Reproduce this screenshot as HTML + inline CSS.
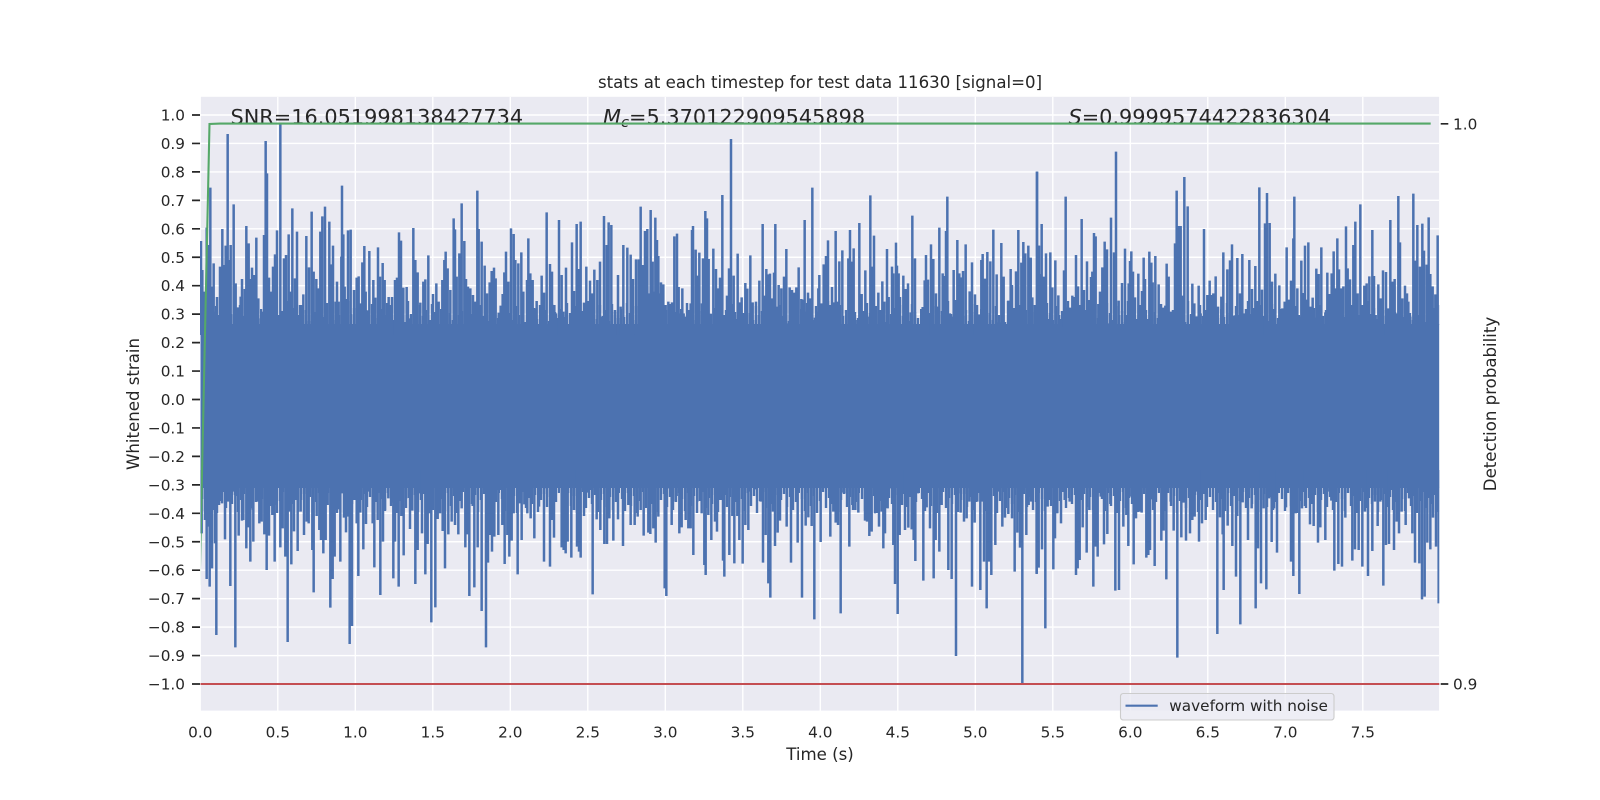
<!DOCTYPE html>
<html lang="en">
<head>
<meta charset="utf-8">
<title>stats at each timestep</title>
<style>
html,body{margin:0;padding:0;background:#fff;width:1600px;height:800px;overflow:hidden}
svg{display:block}
text{font-family:"DejaVu Sans","Liberation Sans",sans-serif;fill:#262626}
.t{font-size:15.28px}
.l{font-size:16.6px}
.a{font-size:20.83px}
.s{fill:none;stroke:#4C72B0;stroke-width:7.5}
</style>
</head>
<body>
<svg width="1600" height="800" viewBox="0 0 1600 800" xmlns="http://www.w3.org/2000/svg">
<defs>
<clipPath id="c"><rect x="200" y="96" width="1239.3" height="616"/></clipPath>
<clipPath id="g"><rect x="200.9" y="96" width="1238" height="616"/></clipPath>
<pattern id="pt" patternUnits="userSpaceOnUse" x="200" y="295" width="60" height="30"><path fill="none" stroke="#4C72B0" stroke-width="2.4" d="M1 30V14M4 30V22M7 30V8M10 30V18M13 30V25M16 30V11M19 30V20M22 30V16M25 30V27M28 30V6M31 30V19M34 30V13M37 30V24M40 30V10M43 30V21M46 30V15M49 30V26M52 30V9M55 30V17M58 30V23"/></pattern>
<pattern id="pb" patternUnits="userSpaceOnUse" x="200" y="487" width="60" height="30"><path fill="none" stroke="#4C72B0" stroke-width="2.4" d="M2 0V12M5 0V24M8 0V6M11 0V19M14 0V9M17 0V26M20 0V14M23 0V5M26 0V21M29 0V11M32 0V17M35 0V8M38 0V25M41 0V13M44 0V7M47 0V20M50 0V10M53 0V23M56 0V15M59 0V6"/></pattern>
</defs>
<rect width="1600" height="800" fill="#fff"/>
<rect x="200.9" y="96.8" width="1238.2" height="613.8" fill="#EAEAF2"/>
<path fill="none" stroke="#fff" stroke-width="1.39" d="M201 115H1439M201 143.45H1439M201 171.9H1439M201 200.35H1439M201 228.8H1439M201 257.25H1439M201 285.7H1439M201 314.15H1439M201 342.6H1439M201 371.05H1439M201 399.5H1439M201 427.95H1439M201 456.4H1439M201 484.85H1439M201 513.3H1439M201 541.75H1439M201 570.2H1439M201 598.65H1439M201 627.1H1439M201 655.55H1439M201 684H1439M277.8 97V711M355.3 97V711M432.8 97V711M510.3 97V711M587.8 97V711M665.3 97V711M742.8 97V711M820.3 97V711M897.8 97V711M975.3 97V711M1052.8 97V711M1130.3 97V711M1207.8 97V711M1285.3 97V711M1362.8 97V711"/>
<g clip-path="url(#c)">
<rect x="200.5" y="295" width="1238.8" height="30" fill="url(#pt)"/>
<rect x="200.5" y="487" width="1238.8" height="30" fill="url(#pb)"/>
<rect x="200.5" y="324" width="1238.8" height="164" fill="#4C72B0"/>
<g transform="translate(200,125) scale(.33333)"><path class="s" d="M3 630V348M7 630V435M12 630V500M20 630V308M25 630V360M31 630V188M41 630V415M36 630V485M47 630V560M51 630V516M60 630V425M67 630V312M72 630V420M77 630V362M83 630V27M92 630V360M88 630V405M101 630V238M107 630V475M114 630V547M118 630V600M122 630V515M126 630V462M130 630V585M134 630V492M139 630V303M146 630V355M151 630V462M156 630V428M162 630V450M169 630V338M175 630V520M183 630V580M188 630V560M192 630V330M197 630V48M201 630V145M207 630V458M214 630V500M219 630V425M225 630V388M231 630V316M241 630V-3M252 630V400M258 630V390M266 630V328M272 630V500M277 630V250M285 630V460M291 630V320M297 630V570M301 630V585M305 630V540M310 630V508M319 630V333M327 630V427M335 630V260M341 630V440M349 630V462M355 630V490M361 630V320M367 630V274M375 630V245M380 630V550M388 630V290M393 630V418M399 630V362M407 630V530M411 630V470M416 630V530M424 630V395M426 630V182M430 630V328M434 630V485M438 630V522M444 630V316M452 630V314M462 630V495M470 630V458M476 630V454M481 630V535M487 630V412M493 630V363M497 630V500M503 630V556M508 630V378M520 630V465M526 630V518M534 630V367M540 630V455M548 630V414M554 630V465M560 630V570M566 630V516M571 630V540M576 630V516M585 630V465M591 630V458M597 630V322M603 630V347M610 630V488M620 630V486M630 630V580M640 630V309M646 630V405M653 630V442M661 630V533M670 630V470M676 630V463M685 630V391M691 630V585M699 630V507M709 630V475M716 630V530M727 630V465M733 630V405M737 630V380M743 630V430M751 630V495M761 630V280M765 630V313M770 630V455M778 630V385M785 630V235M793 630V348M798 630V462M804 630V485M811 630V490M819 630V510M825 630V530M832 630V197M836 630V312M845 630V350M854 630V422M861 630V505M869 630V472M875 630V438M882 630V428M887 630V460M896 630V563M902 630V542M908 630V507M913 630V442M918 630V380M925 630V470M933 630V310M941 630V327M946 630V405M955 630V415M964 630V382M970 630V500M981 630V465M985 630V340M991 630V445M998 630V465M1005 630V550M1010 630V528M1016 630V605M1025 630V452M1032 630V503M1040 630V262M1050 630V417M1056 630V440M1063 630V540M1068 630V565M1077 630V285M1085 630V450M1090 630V560M1098 630V428M1108 630V605M1116 630V352M1122 630V498M1130 630V297M1136 630V432M1142 630V290M1152 630V533M1159 630V425M1164 630V575M1170 630V467M1177 630V505M1183 630V434M1192 630V465M1200 630V410M1206 630V575M1212 630V273M1220 630V360M1226 630V292M1234 630V300M1245 630V555M1254 630V450"/></g>
<g transform="translate(620,125) scale(.33333)"><path class="s" d="M2 630V545M10 630V360M14 630V620M22 630V368M32 630V389M39 630V462M48 630V403M56 630V403M62 630V245M69 630V420M75 630V318M82 630V312M87 630V505M92 630V255M98 630V410M101 630V500M106 630V278M111 630V345M115 630V393M119 630V505M123 630V472M130 630V478M137 630V540M145 630V530M150 630V537M156 630V532M163 630V334M171 630V326M176 630V486M180 630V565M187 630V490M191 630V565M196 630V575M201 630V590M207 630V555M212 630V535M216 630V315M219 630V303M227 630V374M233 630V452M238 630V383M246 630V535M249 630V400M256 630V258M261 630V280M266 630V402M272 630V566M280 630V371M288 630V432M294 630V490M300 630V458M307 630V210M313 630V570M321 630V512M327 630V430M333 630V42M341 630V452M348 630V582M353 630V386M359 630V532M365 630V517M371 630V564M376 630V474M382 630V491M391 630V391M398 630V532M408 630V530M418 630V467M428 630V297M433 630V512M439 630V432M444 630V448M450 630V446M456 630V520M462 630V443M466 630V297M470 630V545M476 630V480M484 630V490M492 630V455M499 630V372M504 630V595M509 630V487M516 630V495M522 630V503M529 630V487M536 630V427M544 630V522M550 630V524M554 630V285M560 630V560M564 630V503M570 630V520M577 630V188M585 630V578M590 630V560M595 630V490M598 630V450M604 630V535M611 630V418M618 630V393M624 630V346M630 630V540M636 630V486M642 630V532M647 630V318M652 630V530M658 630V409M667 630V376M680 630V610M685 630V400M690 630V315M696 630V410M701 630V370M712 630V585M718 630V294M725 630V507M731 630V558M736 630V436M743 630V575M751 630V211M757 630V425M762 630V332M766 630V575M775 630V503M780 630V555M787 630V469M793 630V530M801 630V372M806 630V516M816 630V425M820 630V445M828 630V353M831 630V422M836 630V445M840 630V516M850 630V452M857 630V492M864 630V475M872 630V562M877 630V272M885 630V400M892 630V597M900 630V620M908 630V546M914 630V466M918 630V390M924 630V464M933 630V358M940 630V402M948 630V505M952 630V545M958 630V308M968 630V445M973 630V453M978 630V318M982 630V215M990 630V565M995 630V575M1001 630V435M1006 630V525M1012 630V345M1018 630V445M1022 630V457M1029 630V438M1037 630V358M1049 630V499M1056 630V412M1065 630V508M1071 630V540M1077 630V568M1084 630V405M1088 630V387M1095 630V461M1102 630V381M1111 630V409M1120 630V314M1130 630V448M1137 630V592M1144 630V354M1151 630V455M1158 630V610M1165 630V527M1172 630V432M1176 630V480M1182 630V598M1188 630V439M1195 630V315M1204 630V413M1210 630V351M1216 630V385M1225 630V362M1232 630V400M1245 630V540M1251 630V140M1256 630V362"/></g>
<g transform="translate(1030,125) scale(.33333)"><path class="s" d="M2 630V398M7 630V517M15 630V540M21 630V140M27 630V362M35 630V297M31 630V447M41 630V455M48 630V385M54 630V582M61 630V382M67 630V487M76 630V406M85 630V511M93 630V582M102 630V436M107 630V215M114 630V547M120 630V548M127 630V512M132 630V516M138 630V390M144 630V484M149 630V607M155 630V282M162 630V495M171 630V409M177 630V525M183 630V456M187 630V440M192 630V324M197 630V334M205 630V537M210 630V500M217 630V427M224 630V350M231 630V373M236 630V595M243 630V278M252 630V382M258 630V80M266 630V527M276 630V474M280 630V600M285 630V371M291 630V570M296 630V475M300 630V408M304 630V379M309 630V440M315 630V517M325 630V446M331 630V590M336 630V498M341 630V398M345 630V462M351 630V582M358 630V380M364 630V413M368 630V472M376 630V393M386 630V478M393 630V537M400 630V548M406 630V542M410 630V416M416 630V455M423 630V560M429 630V555M435 630V355M440 630V197M445 630V303M452 630V303M458 630V512M463 630V156M473 630V244M487 630V476M493 630V535M500 630V574M506 630V482M512 630V565M517 630V610M522 630V312M527 630V560M532 630V510M539 630V467M545 630V510M550 630V505M557 630V454M564 630V545M574 630V515M580 630V382M592 630V433M600 630V406M606 630V358M612 630V572M617 630V570M622 630V399M630 630V505M637 630V387M642 630V565M648 630V552M658 630V405M666 630V492M676 630V423M682 630V528M688 630V187M696 630V494M705 630V295M711 630V204M719 630V294M726 630V470M730 630V552M736 630V446M748 630V481M757 630V550M764 630V530M770 630V367M776 630V524M783 630V467M790 630V340M793 630V215M802 630V490M808 630V575M814 630V407M820 630V504M825 630V362M829 630V524M835 630V352M842 630V545M848 630V518M855 630V578M859 630V431M866 630V447M874 630V367M881 630V600M886 630V562M892 630V443M899 630V507M905 630V445M911 630V379M917 630V490M922 630V340M927 630V433M933 630V490M940 630V484M948 630V304M953 630V430M960 630V463M966 630V540M970 630V360M976 630V290M983 630V505M991 630V238M997 630V540M1003 630V482M1010 630V475M1018 630V454M1027 630V315M1032 630V453M1037 630V570M1045 630V478M1052 630V520M1059 630V436M1068 630V441M1075 630V550M1081 630V285M1087 630V470M1094 630V462M1100 630V565M1105 630V213M1110 630V352M1117 630V520M1125 630V482M1131 630V505M1135 630V530M1141 630V575M1150 630V206M1156 630V407M1162 630V300M1170 630V425M1177 630V296M1182 630V377M1190 630V419M1196 630V277M1201 630V447M1208 630V484M1216 630V508M1223 630V331"/></g>
<g transform="translate(200,470) scale(.33333)"><path class="s" d="M5 0V190M15 0V150M20 0V327M25 0V170M29 0V350M36 0V295M42 0V120M45 0V220M49 0V495M57 0V105M66 0V100M75 0V208M84 0V95M91 0V348M99 0V65M106 0V532M112 0V78M116 0V197M122 0V50M126 0V152M130 0V150M139 0V235M145 0V172M151 0V275M155 0V115M160 0V215M171 0V95M178 0V160M185 0V155M193 0V193M200 0V300M207 0V197M212 0V93M217 0V135M224 0V275M230 0V105M241 0V232M248 0V175M256 0V260M263 0V516M270 0V125M274 0V283M282 0V184M286 0V90M293 0V243M302 0V125M312 0V195M320 0V155M326 0V160M337 0V240M341 0V367M350 0V138M358 0V180M363 0V210M370 0V250M377 0V210M383 0V105M391 0V413M398 0V327M404 0V260M410 0V120M414 0V118M421 0V275M427 0V70M432 0V143M438 0V187M443 0V140M449 0V522M456 0V468M463 0V90M470 0V160M475 0V318M481 0V128M490 0V238M498 0V162M505 0V65M518 0V160M523 0V292M533 0V150M541 0V375M549 0V215M555 0V120M565 0V85M574 0V98M580 0V325M585 0V215M596 0V350M604 0V138M611 0V256M619 0V85M630 0V177M637 0V122M646 0V342M653 0V240M657 0V70M666 0V190M676 0V313M683 0V222M687 0V130M694 0V457M706 0V412M713 0V147M720 0V130M728 0V183M735 0V295M745 0V193M755 0V155M765 0V165M775 0V193M785 0V115M796 0V232M801 0V193M808 0V378M818 0V108M823 0V352M833 0V232M845 0V423M851 0V50M858 0V532M864 0V278M869 0V195M876 0V245M883 0V200M889 0V60M895 0V195M901 0V60M907 0V165M914 0V282M922 0V195M928 0V260M935 0V212M941 0V130M953 0V313M958 0V100M965 0V210M973 0V103M982 0V130M992 0V145M1003 0V205M1017 0V110M1032 0V275M1040 0V55M1050 0V290M1056 0V150M1062 0V203M1074 0V35M1085 0V232M1091 0V240M1097 0V250M1103 0V215M1114 0V263M1122 0V120M1131 0V230M1137 0V245M1142 0V263M1152 0V138M1163 0V68M1172 0V60M1178 0V373M1190 0V148M1201 0V180M1213 0V222M1221 0V222M1228 0V145M1240 0V212M1254 0V148"/></g>
<g transform="translate(620,470) scale(.33333)"><path class="s" d="M9 0V228M25 0V105M32 0V165M44 0V165M53 0V140M62 0V120M71 0V197M85 0V188M91 0V192M100 0V175M107 0V218M115 0V140M122 0V52M130 0V30M134 0V355M139 0V378M147 0V55M155 0V165M160 0V95M170 0V78M178 0V190M185 0V172M197 0V150M205 0V175M212 0V175M220 0V255M232 0V95M245 0V130M253 0V285M257 0V315M265 0V135M274 0V210M285 0V155M291 0V185M300 0V90M309 0V272M313 0V320M319 0V75M328 0V255M337 0V138M343 0V280M352 0V138M358 0V210M368 0V281M376 0V165M385 0V180M392 0V65M406 0V58M422 0V95M429 0V278M437 0V195M445 0V340M451 0V383M459 0V125M465 0V228M473 0V188M480 0V152M490 0V40M500 0V170M513 0V278M521 0V40M533 0V218M546 0V383M557 0V167M565 0V142M575 0V168M583 0V448M592 0V15M602 0V216M610 0V55M617 0V50M631 0V200M640 0V125M647 0V158M654 0V165M662 0V430M670 0V68M680 0V70M688 0V230M697 0V105M706 0V120M715 0V128M725 0V35M735 0V152M741 0V155M748 0V198M755 0V185M765 0V130M777 0V170M785 0V125M790 0V235M795 0V190M803 0V115M813 0V55M820 0V225M825 0V342M833 0V432M839 0V195M846 0V105M855 0V180M865 0V173M875 0V178M881 0V210M886 0V273M894 0V70M910 0V332M920 0V112M930 0V175M941 0V325M947 0V210M958 0V245M965 0V105M975 0V50M985 0V300M995 0V327M1008 0V558M1014 0V70M1022 0V128M1032 0V155M1040 0V145M1048 0V95M1056 0V350M1064 0V158M1072 0V95M1081 0V360M1086 0V95M1092 0V275M1100 0V415M1107 0V275M1114 0V315M1126 0V225M1135 0V65M1147 0V170M1155 0V143M1165 0V132M1176 0V145M1184 0V305M1192 0V188M1200 0V233M1207 0V642M1219 0V195M1226 0V105M1240 0V42M1250 0V312"/></g>
<g transform="translate(1030,470) scale(.33333)"><path class="s" d="M3 0V95M10 0V45M20 0V310M26 0V293M36 0V238M46 0V475M53 0V110M60 0V90M70 0V298M75 0V205M82 0V130M93 0V160M104 0V90M112 0V45M119 0V95M127 0V45M138 0V315M143 0V295M149 0V270M158 0V172M170 0V248M178 0V120M190 0V350M197 0V230M203 0V260M212 0V80M222 0V223M232 0V192M241 0V102M256 0V362M267 0V360M280 0V170M289 0V135M295 0V228M304 0V80M311 0V283M318 0V145M328 0V125M335 0V128M349 0V263M355 0V255M360 0V240M367 0V88M374 0V288M380 0V45M394 0V212M401 0V182M409 0V328M422 0V95M431 0V182M442 0V563M454 0V202M461 0V98M468 0V212M480 0V190M487 0V150M494 0V140M500 0V65M507 0V215M516 0V160M527 0V150M540 0V45M562 0V492M570 0V142M578 0V193M581 0V360M593 0V167M607 0V228M618 0V320M622 0V138M631 0V463M638 0V97M654 0V210M665 0V115M677 0V415M684 0V235M693 0V340M701 0V115M709 0V358M717 0V85M725 0V216M732 0V115M741 0V248M754 0V15M768 0V112M783 0V275M790 0V318M797 0V130M808 0V372M816 0V115M825 0V108M840 0V163M851 0V168M864 0V218M871 0V172M886 0V210M893 0V65M904 0V92M913 0V302M925 0V282M936 0V290M946 0V143M955 0V40M967 0V272M975 0V238M986 0V240M997 0V290M1005 0V125M1014 0V318M1027 0V243M1035 0V95M1043 0V168M1051 0V95M1060 0V347M1068 0V225M1077 0V222M1084 0V60M1092 0V240M1100 0V155M1107 0V190M1115 0V125M1127 0V165M1137 0V85M1147 0V190M1155 0V278M1168 0V280M1176 0V388M1184 0V380M1192 0V218M1201 0V238M1209 0V143M1218 0V230M1226 0V400"/></g>
</g>
<text class="a" x="230.5" y="124">SNR=16.051998138427734</text>
<text class="a" x="603" y="124"><tspan font-style="italic">M</tspan><tspan font-style="italic" font-size="14.6" dy="3.2">c</tspan><tspan dy="-3.2">=5.370122909545898</tspan></text>
<text class="a" x="1068.5" y="124"><tspan font-style="italic">S</tspan>=0.9999574422836304</text>
<g clip-path="url(#g)"><path fill="none" stroke="#55A868" stroke-width="2.08" d="M199.6 585L209.5 124L220 123.6H1430.7"/></g>
<path fill="none" stroke="#C44E52" stroke-width="2.08" d="M200.5 684H1439.3"/>
<rect x="1120.5" y="693.5" width="213.5" height="26.5" rx="2.8" fill="#EAEAF2" fill-opacity=".8" stroke="#ccc" stroke-width="1.1"/>
<path fill="none" stroke="#4C72B0" stroke-width="2.08" d="M1125.5 705.7H1157.7"/>
<text class="t" x="1169.3" y="711">waveform with noise</text>
<path fill="none" stroke="#262626" stroke-width="1.7" d="M192 115H200M192 143.45H200M192 171.9H200M192 200.35H200M192 228.8H200M192 257.25H200M192 285.7H200M192 314.15H200M192 342.6H200M192 371.05H200M192 399.5H200M192 427.95H200M192 456.4H200M192 484.85H200M192 513.3H200M192 541.75H200M192 570.2H200M192 598.65H200M192 627.1H200M192 655.55H200M192 684H200M1440.7 123.8H1448.3M1440.7 684H1448.3"/>
<g class="t" text-anchor="end">
<text class="t" x="185" y="120.5">1.0</text>
<text class="t" x="185" y="149">0.9</text>
<text class="t" x="185" y="177.4">0.8</text>
<text class="t" x="185" y="205.9">0.7</text>
<text class="t" x="185" y="234.3">0.6</text>
<text class="t" x="185" y="262.8">0.5</text>
<text class="t" x="185" y="291.2">0.4</text>
<text class="t" x="185" y="319.7">0.3</text>
<text class="t" x="185" y="348.1">0.2</text>
<text class="t" x="185" y="376.6">0.1</text>
<text class="t" x="185" y="405">0.0</text>
<text class="t" x="185" y="433.5">−0.1</text>
<text class="t" x="185" y="461.9">−0.2</text>
<text class="t" x="185" y="490.4">−0.3</text>
<text class="t" x="185" y="518.8">−0.4</text>
<text class="t" x="185" y="547.3">−0.5</text>
<text class="t" x="185" y="575.7">−0.6</text>
<text class="t" x="185" y="604.2">−0.7</text>
<text class="t" x="185" y="632.6">−0.8</text>
<text class="t" x="185" y="661.1">−0.9</text>
<text class="t" x="185" y="689.5">−1.0</text>
</g>
<text class="t" x="1453" y="129.3">1.0</text>
<text class="t" x="1453" y="689.5">0.9</text>
<g text-anchor="middle">
<text class="t" x="200.3" y="737.5">0.0</text>
<text class="t" x="277.8" y="737.5">0.5</text>
<text class="t" x="355.3" y="737.5">1.0</text>
<text class="t" x="432.8" y="737.5">1.5</text>
<text class="t" x="510.3" y="737.5">2.0</text>
<text class="t" x="587.8" y="737.5">2.5</text>
<text class="t" x="665.3" y="737.5">3.0</text>
<text class="t" x="742.8" y="737.5">3.5</text>
<text class="t" x="820.3" y="737.5">4.0</text>
<text class="t" x="897.8" y="737.5">4.5</text>
<text class="t" x="975.3" y="737.5">5.0</text>
<text class="t" x="1052.8" y="737.5">5.5</text>
<text class="t" x="1130.3" y="737.5">6.0</text>
<text class="t" x="1207.8" y="737.5">6.5</text>
<text class="t" x="1285.3" y="737.5">7.0</text>
<text class="t" x="1362.8" y="737.5">7.5</text>
<text class="l" x="820" y="760">Time (s)</text>
<text class="l" x="820" y="88">stats at each timestep for test data 11630 [signal=0]</text>
<text class="l" transform="translate(139,404) rotate(-90)">Whitened strain</text>
<text class="l" transform="translate(1496,404) rotate(-90)">Detection probability</text>
</g>
</svg>
</body>
</html>
